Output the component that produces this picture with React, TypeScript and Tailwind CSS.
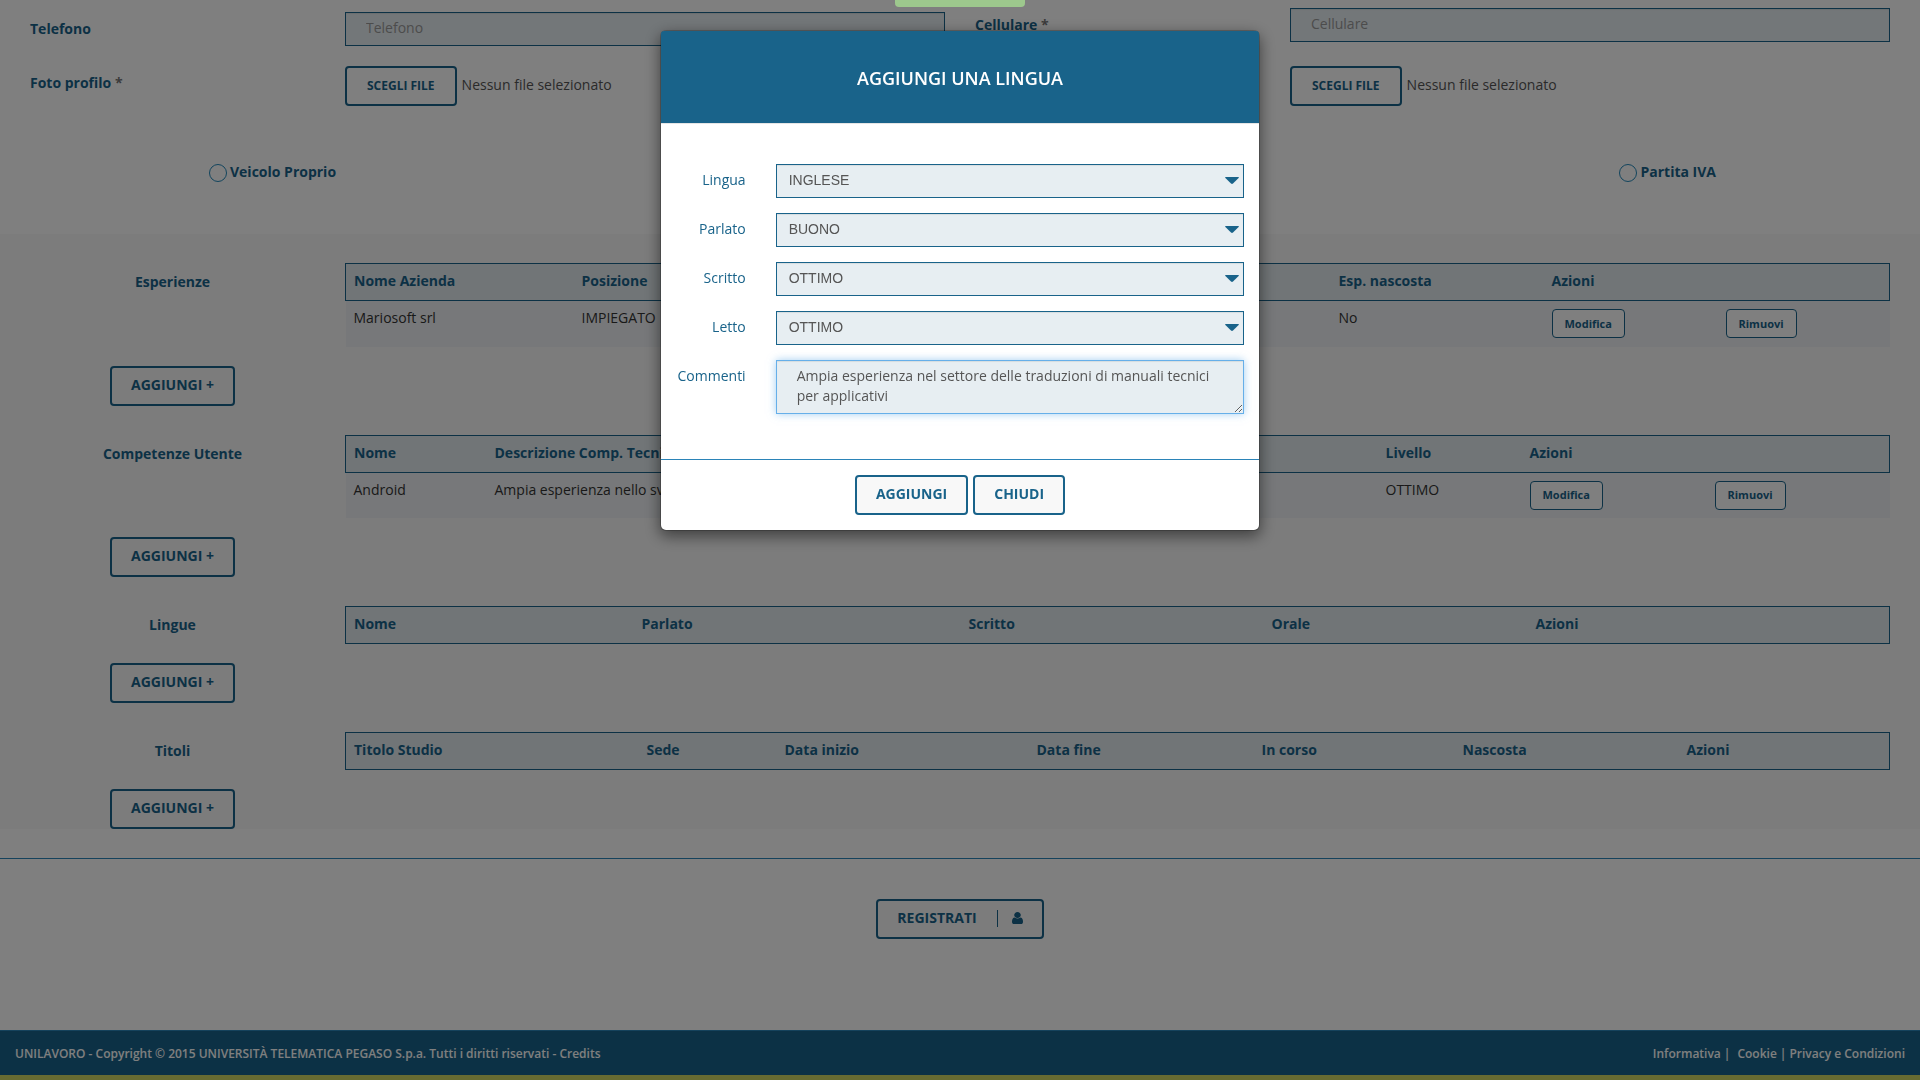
import { useState } from "react";
import type { ReactNode } from "react";

const LIVELLI = ["OTTIMO", "BUONO", "SUFFICIENTE"];
const LINGUE = ["INGLESE", "FRANCESE", "SPAGNOLO"];

const BUTTON = "h-10 rounded border-2 border-[#19638a] bg-[#f8f8f8] px-[19px] pt-[7px] pb-[9px] leading-5 font-bold text-[#19638a]";
const FIELD = "w-full border border-[#19638a] bg-[#e7eef2] text-[#555] shadow-[inset_0_1px_1px_rgba(0,0,0,0.075)] outline-none";

interface Column {
    title: string;
    width: string;
}

interface SectionProps {
    title: string;
    columns: Column[];
    rows?: string[][];
}

const ESPERIENZE: Column[] = [
    { title: "Nome Azienda", width: "w-[228px]" },
    { title: "Posizione", width: "" },
    { title: "Esp. nascosta", width: "w-[213px]" },
    { title: "Azioni", width: "w-[174px]" },
    { title: "", width: "w-[172px]" },
];

const COMPETENZE: Column[] = [
    { title: "Nome", width: "w-[141px]" },
    { title: "Descrizione Comp. Tecnica", width: "" },
    { title: "Livello", width: "w-[144px]" },
    { title: "Azioni", width: "w-[185px]" },
    { title: "", width: "w-[183px]" },
];

const LINGUE_COLUMNS: Column[] = [
    { title: "Nome", width: "w-[288px]" },
    { title: "Parlato", width: "w-[327px]" },
    { title: "Scritto", width: "w-[303px]" },
    { title: "Orale", width: "w-[264px]" },
    { title: "Azioni", width: "" },
];

const TITOLI: Column[] = [
    { title: "Titolo Studio", width: "w-[293px]" },
    { title: "Sede", width: "w-[138px]" },
    { title: "Data inizio", width: "w-[252px]" },
    { title: "Data fine", width: "w-[225px]" },
    { title: "In corso", width: "w-[201px]" },
    { title: "Nascosta", width: "w-[224px]" },
    { title: "Azioni", width: "" },
];

function SmallButton({ children }: { children: ReactNode }) {
    return (
        <button type="button"
            className="block h-[29px] rounded border border-[#19638a] bg-white px-3 text-[11px] leading-4 font-bold text-[#19638a]">
            {children}
        </button>
    );
}

function Section({ title, columns, rows = [] }: SectionProps) {
    return (
        <section className="grid grid-cols-12 gap-y-[19px]">
            <h2 className="col-span-2 pt-[9px] text-center font-bold text-[#19638a]">{title}</h2>
            <div className="col-span-10 px-[15px]">
                <table className="w-full table-fixed border-collapse text-left">
                    <thead className="border border-[#19638a] bg-[#e2eaee]">
                        <tr className="h-[37px] align-top">
                            {columns.map((column, index) => (
                                <th key={index} className={`${column.width} px-2 pt-[7px] font-bold whitespace-nowrap text-[#19638a]`}>
                                    {column.title}
                                </th>
                            ))}
                        </tr>
                    </thead>
                    <tbody>
                        {rows.map((row) => (
                            <tr key={row[0]} className="h-[46px] bg-[#eef1f4] align-top text-[#333]">
                                {row.map((cell, index) => (
                                    <td key={index} className="truncate px-2 pt-[7px]">{cell}</td>
                                ))}
                                <td className="px-2 pt-2"><SmallButton>Modifica</SmallButton></td>
                                <td className="px-2 pt-2"><SmallButton>Rimuovi</SmallButton></td>
                            </tr>
                        ))}
                    </tbody>
                </table>
            </div>
            <div className="col-span-2 text-center">
                <button type="button" className={BUTTON}>AGGIUNGI +</button>
            </div>
        </section>
    );
}

function FilePicker({ id }: { id: string }) {
    return (
        <div className="flex items-center gap-[5px]">
            <button type="button" id={id}
                className="h-10 rounded border-2 border-[#19638a] bg-white px-5 text-xs font-bold text-[#19638a]">
                SCEGLI FILE
            </button>
            <span className="pb-[2px] text-[#555]">Nessun file selezionato</span>
        </div>
    );
}

function RadioOption({ id, label }: { id: string; label: string }) {
    return (
        <div className="flex items-end gap-[3px]">
            <input type="radio" id={id} name={id}
                className="size-[18px] appearance-none rounded-full border border-[#2489bb] checked:bg-[#19638a]" />
            <label htmlFor={id} className="font-bold text-[#19638a]">{label}</label>
        </div>
    );
}

interface SelectRowProps {
    id: string;
    label: string;
    options: string[];
    initial: string;
}

function SelectRow({ id, label, options, initial }: SelectRowProps) {
    const [value, setValue] = useState<string>(initial);

    return (
        <div className="grid grid-cols-12">
            <label htmlFor={id} className="col-span-2 pt-[6px] pr-[15px] text-right text-[#19638a]">{label}</label>
            <div className="relative col-span-10 px-[15px]">
                <select id={id} value={value} onChange={(e) => setValue(e.target.value)}
                    className={`${FIELD} block h-[34px] appearance-none px-3 pb-[2px] font-['Liberation_Sans',Arial,sans-serif]`}>
                    {options.map((option) => (
                        <option key={option} value={option}>{option}</option>
                    ))}
                </select>
                <svg viewBox="0 0 14 7" className="pointer-events-none absolute top-[13px] right-5 h-[7px] w-[14px] fill-[#19638a]">
                    <path d="M0.7 0h12.6q1 0.2 0.3 1L8 6.5q-1 0.9-2 0L0.4 1Q-0.3 0.2 0.7 0z" />
                </svg>
            </div>
        </div>
    );
}

function UserIcon() {
    return (
        <svg viewBox="0 128 1280 1536" className="h-[12px] w-[11px] fill-[#19638a]" preserveAspectRatio="none">
            <path d="M1280 1399q0 109-62.500 187t-150.500 78h-854q-88 0-150.500-78t-62.500-187q0-85 8.500-160.500t31.500-152 58.500-131 94-89 134.500-34.500q131 128 313 128t313-128q76 0 134.500 34.500t94 89 58.500 131 31.500 152 8.500 160.500zm-256-887q0 159-112.500 271.500t-271.500 112.500-271.500-112.500-112.500-271.500 112.500-271.500 271.500-112.500 271.500 112.500 112.500 271.500z" />
        </svg>
    );
}

function LinguaModal() {
    const [commenti, setCommenti] = useState<string>(
        "Ampia esperienza nel settore delle traduzioni di manuali tecnici per applicativi");

    return (
        <div className="fixed inset-0 flex items-start justify-center bg-black/50 pt-[30px]">
            <div role="dialog" aria-modal="true" aria-labelledby="modal-title"
                className="w-[600px] rounded-md border border-black/20 bg-white bg-clip-padding shadow-[0_5px_15px_rgba(0,0,0,0.5)]">
                <div className="rounded-t-[3px] border-b border-[#e5e5e5] bg-[#19638a] bg-clip-padding pt-[35px] pb-8 text-center">
                    <h1 id="modal-title" className="text-lg leading-[25px] font-semibold text-white">AGGIUNGI UNA LINGUA</h1>
                </div>
                <form className="flex flex-col gap-[15px] pt-10 pb-[45px]">
                    <SelectRow id="lingua" label="Lingua" options={LINGUE} initial="INGLESE" />
                    <SelectRow id="parlato" label="Parlato" options={LIVELLI} initial="BUONO" />
                    <SelectRow id="scritto" label="Scritto" options={LIVELLI} initial="OTTIMO" />
                    <SelectRow id="letto" label="Letto" options={LIVELLI} initial="OTTIMO" />
                    <div className="grid grid-cols-12">
                        <label htmlFor="commenti" className="col-span-2 pt-[6px] pr-[15px] text-right text-[#19638a]">Commenti</label>
                        <div className="col-span-10 px-[15px]">
                            <textarea id="commenti" rows={2} value={commenti} onChange={(e) => setCommenti(e.target.value)}
                                className="block h-[54px] w-full border border-[#66afe9] bg-[#e7eef2] px-5 pt-[5px] pb-[7px] text-[#555] shadow-[inset_0_1px_1px_rgba(0,0,0,0.075),0_0_8px_rgba(102,175,233,0.6)] outline-none" />
                        </div>
                    </div>
                </form>
                <div className="flex justify-center gap-[5px] border-t border-[#2b84b8] py-[15px]">
                    <button type="button" className={BUTTON}>AGGIUNGI</button>
                    <button type="button" className={BUTTON}>CHIUDI</button>
                </div>
            </div>
        </div>
    );
}

export default function App() {
    return (
        <div className="flex min-h-screen flex-col bg-white font-['Open_Sans',sans-serif] text-sm leading-5">
            <main>
                <div className="grid grid-cols-2 px-[15px]">
                    <div className="grid grid-cols-3 gap-y-5 pt-3">
                        <label htmlFor="telefono" className="px-[15px] pt-[7px] font-bold text-[#19638a]">Telefono</label>
                        <div className="col-span-2 px-[15px]">
                            <input id="telefono" type="text" placeholder="Telefono"
                                className={`${FIELD} block h-[34px] px-5 pb-1 placeholder:text-[#999]`} />
                        </div>
                        <label htmlFor="foto" className="px-[15px] pt-[7px] font-bold text-[#19638a]">
                            Foto profilo <span className="text-[#777]">*</span>
                        </label>
                        <div className="col-span-2 px-[15px]"><FilePicker id="foto" /></div>
                    </div>
                    <div className="grid grid-cols-3 gap-y-6 pt-2">
                        <label htmlFor="cellulare" className="px-[15px] pt-[7px] font-bold text-[#19638a]">
                            Cellulare <span className="text-[#777]">*</span>
                        </label>
                        <div className="col-span-2 px-[15px]">
                            <input id="cellulare" type="text" placeholder="Cellulare"
                                className={`${FIELD} block h-[34px] px-5 pb-1 placeholder:text-[#999]`} />
                        </div>
                        <div className="col-span-2 col-start-2 px-[15px]"><FilePicker id="allegato" /></div>
                    </div>
                </div>

                <div className="flex justify-between pt-14 pr-[204px] pb-[52px] pl-[209px]">
                    <RadioOption id="veicolo" label="Veicolo Proprio" />
                    <RadioOption id="partita-iva" label="Partita IVA" />
                </div>

                <div className="flex flex-col gap-[29px] bg-[#f8f8f8] px-[15px] pt-[29px]">
                    <Section title="Esperienze" columns={ESPERIENZE} rows={[["Mariosoft srl", "IMPIEGATO", "No"]]} />
                    <Section title="Competenze Utente" columns={COMPETENZE}
                        rows={[["Android", "Ampia esperienza nello sviluppo", "OTTIMO"]]} />
                    <Section title="Lingue" columns={LINGUE_COLUMNS} />
                    <Section title="Titoli" columns={TITOLI} />
                </div>

                <div className="mt-[29px] flex justify-center border-t border-[#2b84b8] py-10">
                    <button type="submit" className={`${BUTTON} flex items-center`}>
                        REGISTRATI
                        <span className="mr-[14px] ml-5 h-[17px] w-px bg-[#19638a]" />
                        <UserIcon />
                    </button>
                </div>
            </main>

            <footer className="mt-auto flex items-center justify-between border-t border-b-[5px] border-t-[#2b84b8] border-b-[#ced664] bg-[#19638a] px-[15px] pt-[13px] pb-[11px] text-xs leading-5 font-semibold text-white">
                <p>UNILAVORO - Copyright © 2015 UNIVERSITÀ TELEMATICA PEGASO S.p.a. Tutti i diritti riservati - <a href="#credits">Credits</a></p>
                <nav className="flex gap-[3px]">
                    <a href="#informativa">Informativa</a>
                    <span className="mr-1">|</span>
                    <a href="#cookie">Cookie</a>
                    <span>|</span>
                    <a href="#privacy">Privacy e Condizioni</a>
                </nav>
            </footer>

            <LinguaModal />
            {/* bottom edge of the notification while it slides out */}
            <div className="fixed top-0 left-1/2 h-[7px] w-[130px] -translate-x-1/2 rounded-b bg-[#9dc88d]" />
        </div>
    );
}
